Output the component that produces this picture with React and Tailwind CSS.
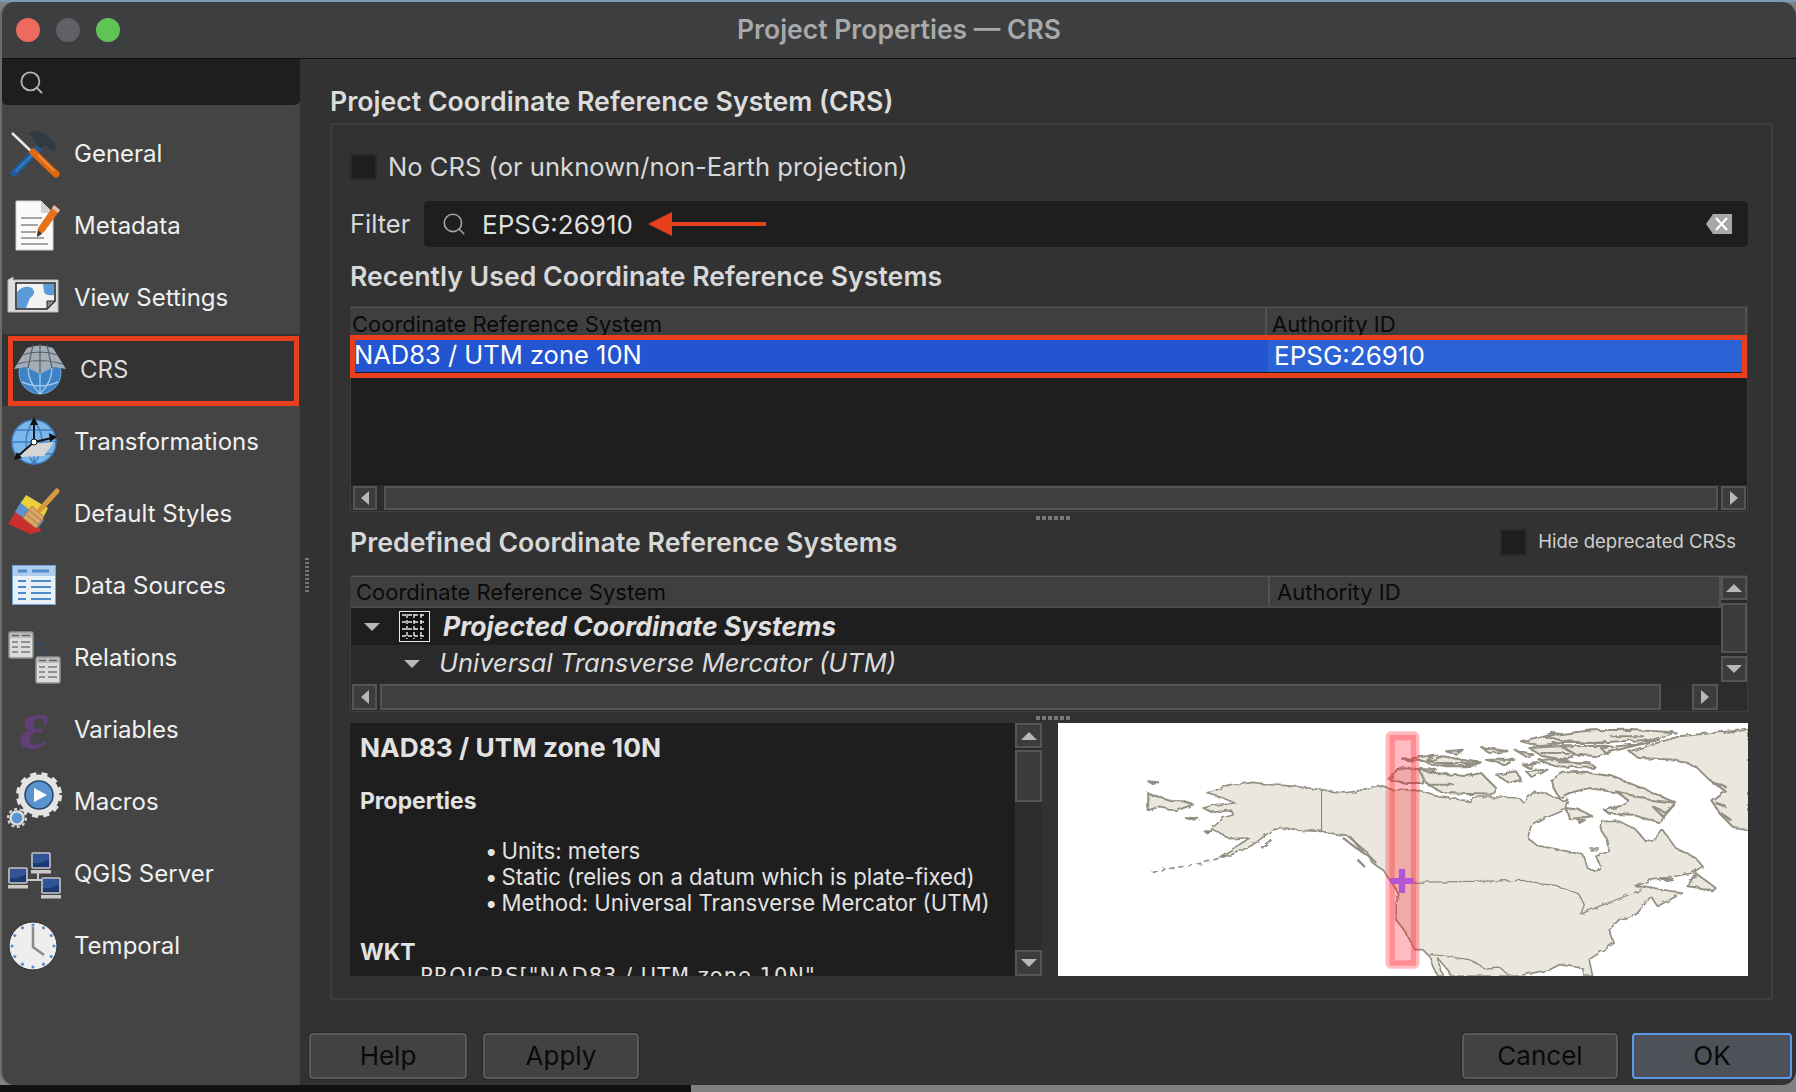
import { Search } from "lucide-react";

const FONT = "font-['Inter','Liberation_Sans',sans-serif]";

// ---- sidebar icons, all on a 60x60 box ----
const IconGeneral = () => (
  <svg width="60" height="60" viewBox="0 0 60 60">
    <line x1="8" y1="9" x2="29" y2="29" stroke="#e8e8e8" strokeWidth="2.5" />
    <line x1="10" y1="49" x2="34" y2="25" stroke="#1f5c9e" strokeWidth="7" strokeLinecap="round" />
    <line x1="12" y1="47" x2="32" y2="27" stroke="#3a7fc4" strokeWidth="2" strokeLinecap="round" />
    <path d="M24 9 Q35 4 44 12 L53 23 L49 28 L41 21 L37 25 L30 18 Q29 12 24 9 Z" fill="#2e3b42" />
    <line x1="29" y1="28" x2="52" y2="50" stroke="#e0680f" strokeWidth="7" strokeLinecap="round" />
    <line x1="34" y1="31" x2="50" y2="47" stroke="#f59a4a" strokeWidth="1.5" />
  </svg>
);
const IconMetadata = () => (
  <svg width="60" height="60" viewBox="0 0 60 60">
    <path d="M12 5 H37 L49 17 V54 H12 Z" fill="#fafafa" stroke="#cfcfcf" />
    <path d="M37 5 V17 H49 Z" fill="#cfd2d4" />
    <path d="M17 22 H38 M17 29 H34 M17 36 H32 M17 42 H40 M17 48 H44" stroke="#a5a5a5" strokeWidth="2" />
    <path d="M50 9 L56 14 L40 36 L33 41 L34 32 Z" fill="#e8721c" />
    <path d="M50 9 L56 14 L54 17 L48 12 Z" fill="#d9c0b2" />
    <path d="M33 41 L34 34 L38 38 Z" fill="#3a3a3a" />
  </svg>
);
const IconView = () => (
  <svg width="60" height="60" viewBox="0 0 60 60">
    <path d="M4 12 L9 9 V12 H54 V44 H4 Z" fill="#dedede" stroke="#b5b5b5" />
    <path d="M12 15 H51 V33 L43 41 H12 Z" fill="#f2f2f2" stroke="#222" strokeWidth="1.5" />
    <path d="M13 24 Q20 16 28 20 Q33 25 26 30 L22 40 H13 Z" fill="#5b9bd8" />
    <path d="M39 16 H50 V27 Q42 28 40 24 Z" fill="#5b9bd8" />
    <path d="M51 33 H43 V41 Z" fill="#8a8a8a" stroke="#222" />
  </svg>
);
const IconCrs = () => (
  <svg width="60" height="60" viewBox="0 0 60 60">
    <circle cx="30" cy="33" r="21" fill="#3d83c6" stroke="#6ea6da" />
    <path d="M12 42 Q30 50 48 42 M30 24 V54 M30 54 Q18 42 18 28 M30 54 Q42 42 42 28" stroke="#9cc6ea" strokeWidth="1.4" fill="none" />
    <path d="M4 29 L17 8 Q30 3 43 8 L56 29 L44 27 L30 34 L16 27 Z" fill="#a3adb6" />
    <path d="M23 5 L18 28 M37 5 L42 28 M30 4 V33 M12 15 Q30 9 48 15 M7 24 Q30 17 53 24" stroke="#55606a" strokeWidth="1.2" fill="none" />
  </svg>
);
const IconTransform = () => (
  <svg width="60" height="60" viewBox="0 0 60 60">
    <circle cx="30" cy="30" r="22" fill="#7db7ea" stroke="#3d7fc0" strokeWidth="1.5" />
    <path d="M8 30 H52 M12 18 H48 M12 42 H48 M30 8 V52 M30 8 Q14 30 30 52 M30 8 Q46 30 30 52" stroke="#3d7fc0" strokeWidth="1.4" fill="none" />
    <path d="M16 45 L26 32 L50 30 L40 44 Z" fill="#d5d5d5" />
    <path d="M30 8 V30 M30 30 L48 26 M30 30 L14 44" stroke="#111" strokeWidth="1.8" />
    <path d="M30 5 L26 13 H34 Z M53 25 L45 21 L46 30 Z M10 48 L18 46 L13 40 Z" fill="#111" />
    <circle cx="30" cy="30" r="3" fill="#fff" stroke="#111" />
  </svg>
);
const IconStyles = () => (
  <svg width="60" height="60" viewBox="0 0 60 60">
    <path d="M4 40 L14 24 L38 47 L26 50 Z" fill="#c9302c" />
    <path d="M11 28 L18 16 L40 36 L34 44 Z" fill="#5d92cf" />
    <path d="M17 19 L22 11 L44 24 L38 36 Z" fill="#e9d23b" />
    <path d="M28 22 L40 33 L32 44 L19 34 Z" fill="#d9a868" stroke="#b07c3e" />
    <path d="M23 31 L35 41 M26 27 L38 37" stroke="#a8743a" strokeWidth="1" />
    <line x1="36" y1="26" x2="53" y2="7" stroke="#d99a3f" strokeWidth="5" strokeLinecap="round" />
  </svg>
);
const IconData = () => (
  <svg width="60" height="60" viewBox="0 0 60 60">
    <rect x="8.5" y="9.5" width="43" height="39" fill="#e8f0f8" stroke="#6ea6da" />
    <rect x="9" y="10" width="42" height="10" fill="#aecdec" />
    <path d="M14 15 H23 M28 15 H45" stroke="#4f8ac8" strokeWidth="3" />
    <path d="M14 25 H22 M27 25 H47 M14 31 H22 M27 31 H47 M14 37 H22 M27 37 H47 M14 43 H22 M27 43 H47" stroke="#4f8ac8" strokeWidth="1.8" />
  </svg>
);
const TinyTable = ({ x, y }) => (
  <g>
    <rect x={x} y={y} width="24" height="26" rx="1.5" fill="#dcdcdc" stroke="#8f8f8f" strokeWidth="1.5" />
    <rect x={x + 1} y={y + 1} width="22" height="5" fill="#bdbdbd" />
    <path d={`M${x + 3} ${y + 3.5} H${x + 10} M${x + 13} ${y + 3.5} H${x + 21}`} stroke="#666" strokeWidth="1.4" />
    <path d={`M${x + 3} ${y + 10} H${x + 9} M${x + 12} ${y + 10} H${x + 21} M${x + 3} ${y + 15} H${x + 9} M${x + 12} ${y + 15} H${x + 21} M${x + 3} ${y + 20} H${x + 9} M${x + 12} ${y + 20} H${x + 21}`} stroke="#777" strokeWidth="1.4" />
  </g>
);
const IconRelations = () => (
  <svg width="60" height="60" viewBox="0 0 60 60">
    <path d="M29 15 H38 V30" stroke="#2c4a70" strokeWidth="1.5" fill="none" />
    <TinyTable x={5} y={4} />
    <TinyTable x={32} y={29} />
  </svg>
);
const IconMacros = () => (
  <svg width="60" height="60" viewBox="0 0 60 60">
    <circle cx="35" cy="23" r="17" fill="none" stroke="#e4e4e4" strokeWidth="7" />
    <circle cx="35" cy="23" r="21" fill="none" stroke="#e4e4e4" strokeWidth="4" strokeDasharray="6 5.2" />
    <circle cx="35" cy="23" r="14" fill="#5b93d0" stroke="#28476b" strokeWidth="1.5" />
    <path d="M30 16 L43 23 L30 30 Z" fill="#fff" />
    <circle cx="13" cy="46" r="6.5" fill="#5b93d0" stroke="#dcdcdc" strokeWidth="2.5" />
    <circle cx="13" cy="46" r="9" fill="none" stroke="#dcdcdc" strokeWidth="2" strokeDasharray="3 2.6" />
  </svg>
);
const TinyPc = ({ x, y }) => (
  <g>
    <rect x={x} y={y} width="18" height="15" rx="1" fill="#2f5597" stroke="#c4c4c4" strokeWidth="1.6" />
    <path d={`M${x + 1} ${y + 10} Q${x + 10} ${y + 11} ${x + 17} ${y + 6} V${y + 14} H${x + 1} Z`} fill="#1c3a70" />
    <rect x={x - 1} y={y + 17} width="20" height="3.5" fill="#c9c9c9" />
  </g>
);
const IconServer = () => (
  <svg width="60" height="60" viewBox="0 0 60 60">
    <path d="M14 36 H44 M34 29 V36" stroke="#c8c8c8" strokeWidth="2" />
    <TinyPc x={28} y={9} />
    <TinyPc x={5} y={24} />
    <TinyPc x={38} y={34} />
  </svg>
);
const IconClock = () => (
  <svg width="60" height="60" viewBox="0 0 60 60">
    <circle cx="29" cy="30" r="24" fill="#eeeeee" stroke="#2c2c2c" strokeWidth="1" />
    {[0, 30, 60, 90, 120, 150, 180, 210, 240, 270, 300, 330].map((a) => (
      <circle
        key={a}
        cx={29 + 21 * Math.sin((a * Math.PI) / 180)}
        cy={30 - 21 * Math.cos((a * Math.PI) / 180)}
        r="1.6"
        fill="#5b8ec8"
      />
    ))}
    <path d="M29 11 V31 L40 39" stroke="#8b8b8b" strokeWidth="2.6" fill="none" />
  </svg>
);
const IconVariables = () => (
  <div className="w-[60px] h-[60px] flex items-center justify-center font-['Liberation_Serif',serif] font-bold italic text-[70px] leading-none text-[#61407a] pb-[10px]">ε</div>
);

const sideItems = [
  { label: "General", icon: <IconGeneral /> },
  { label: "Metadata", icon: <IconMetadata /> },
  { label: "View Settings", icon: <IconView /> },
  { label: "CRS", icon: <IconCrs />, selected: true },
  { label: "Transformations", icon: <IconTransform /> },
  { label: "Default Styles", icon: <IconStyles /> },
  { label: "Data Sources", icon: <IconData /> },
  { label: "Relations", icon: <IconRelations /> },
  { label: "Variables", icon: <IconVariables /> },
  { label: "Macros", icon: <IconMacros /> },
  { label: "QGIS Server", icon: <IconServer /> },
  { label: "Temporal", icon: <IconClock /> },
];

function SideItem({ label, icon, selected }) {
  if (selected) {
    return (
      <div className="relative h-[72px] flex items-center pl-[8px] gap-[10px] bg-[#333333] text-[#dcdcdc]">
        {icon}
        <span className="text-[24px]">{label}</span>
        <div className="absolute left-[6px] right-[1px] top-[2px] bottom-0 border-[5px] border-[#e8401f]" />
      </div>
    );
  }
  return (
    <div className="h-[72px] flex items-center pl-[2px] gap-[10px] text-[#f0f0f0]">
      {icon}
      <span className="text-[24px]">{label}</span>
    </div>
  );
}

// ---- small Qt widgets ----
const Tri = ({ dir }) => {
  const d = {
    left: "M9 1 V15 L1 8 Z",
    right: "M1 1 V15 L9 8 Z",
  }[dir];
  if (d) {
    return (
      <svg width="10" height="16" viewBox="0 0 10 16">
        <path d={d} fill="#b8b8b8" />
      </svg>
    );
  }
  return (
    <svg width="16" height="10" viewBox="0 0 16 10">
      <path d={dir === "up" ? "M0 9 H16 L8 1 Z" : "M0 1 H16 L8 9 Z"} fill="#b8b8b8" />
    </svg>
  );
};

const ScrollBtn = ({ dir, className }) => (
  <div className={`flex items-center justify-center border-2 border-[#555555] bg-[#3c3c3c] ${className}`}>
    <Tri dir={dir} />
  </div>
);

const Dots = () => (
  <div className="flex justify-center gap-[2px] pl-[8px]">
    {[0, 1, 2, 3, 4, 5].map((i) => (
      <div key={i} className="w-[4px] h-[4px] bg-[#777777]" />
    ))}
  </div>
);

const Check = ({ className }) => (
  <div className={`bg-[#1e1e1e] border-2 border-[#292929] ${className}`} />
);

const HeaderCell = ({ className, children }) => (
  <div className={`h-full overflow-hidden border-r-2 border-[#525252] text-[#0a0a0a] text-[22px] leading-[28px] ${className}`}>
    {children}
  </div>
);

const Button = ({ children, className }) => (
  <div className={`h-[46px] flex items-center justify-center pb-[1px] rounded-[4px] border-2 border-[#5a5a5a] outline outline-1 outline-[#262626] bg-[#424242] text-[#0a0a0a] text-[26px] ${className}`}>
    {children}
  </div>
);

// ---- map preview, traced in 3x pixels of the panel ----
const LAND = "M451 212 L496 192 546 184 586 178 646 186 686 188 791 200 856 210 896 205 961 188 1006 200 1066 200 1106 210 1146 222 1190 226 1236 235 1248 222 1316 222 1386 225 1398 238 1431 205 1466 212 1516 232 1531 228 1523 260 1466 285 1421 310 1411 345 1441 368 1506 380 1576 395 1591 435 1616 448 1631 430 1616 400 1656 385 1651 350 1631 320 1636 295 1686 295 1736 320 1766 355 1801 345 1816 320 1856 375 1916 405 1936 430 1906 450 1826 465 1776 472 1736 492 1766 490 1816 500 1876 510 1801 550 1781 520 1766 540 1736 575 1686 590 1656 620 1671 660 1596 710 1606 759 1581 759 1576 735 1506 725 1476 740 1381 759 1181 759 1170 740 1141 705 1150 745 1161 759 1141 759 1126 730 1116 700 1096 680 1071 680 1046 630 1016 590 1016 540 1024 515 1001 478 981 445 946 420 926 385 871 340 792 325 726 322 686 315 646 320 586 365 531 392 486 402 576 345 516 347 486 330 461 318 496 285 526 275 521 262 461 268 436 255 476 245 531 240 496 225 Z";
const ISLANDS = [
  "M1086 105 1130 95 1190 110 1270 118 1240 130 1170 130 1120 125 Z",
  "M996 170 1016 135 1136 140 1091 180 1046 180 Z",
  "M1036 110 1131 95 1106 115 Z",
  "M1086 140 1136 150 1226 160 1271 150 1316 195 1301 215 1156 210 1106 180 Z",
  "M1316 155 1376 145 1391 170 1356 180 Z",
  "M1406 145 1471 140 1426 165 Z",
  "M1481 170 1526 145 1596 150 1666 160 1766 200 1856 240 1821 280 1776 250 1806 262 1686 210 1596 195 1536 210 1506 225 1486 190 Z",
  "M1642 262 1686 250 1714 232 1676 205 1776 230 1856 240 1826 270 1786 250 1821 285 1806 300 1726 275 1656 272 Z",
  "M1391 55 1431 45 1486 30 1556 40 1516 62 1446 70 Z",
  "M1456 40 1606 22 1706 20 1856 28 1786 50 1686 55 1606 60 1526 55 Z",
  "M1416 75 1506 70 1556 90 1526 110 1456 100 Z",
  "M1516 70 1646 68 1686 75 1626 100 1556 95 Z",
  "M1446 112 1486 108 1606 125 1616 135 1496 130 Z",
  "M1631 75 1726 65 1806 50 1726 70 1646 90 Z",
  "M1271 72 1351 85 1296 90 Z",
  "M1166 85 1216 80 1196 95 Z",
  "M1111 115 1156 100 1266 120 1206 130 Z",
  "M1286 110 1371 110 1346 125 Z",
  "M1371 80 1431 95 1406 100 Z",
  "M1396 125 1446 120 1416 135 Z",
  "M1526 255 1566 260 1606 280 1536 288 Z",
  "M1561 292 1586 290 1566 300 Z",
  "M1716 85 1866 40 1966 30 2076 20 2076 322 2031 315 1986 270 1966 235 2006 205 1956 170 1916 130 1856 110 1746 105 Z",
  "M1891 490 1916 450 1936 465 1976 495 1966 505 1931 495 Z",
  "M271 210 311 225 341 235 376 235 406 245 376 255 356 265 306 250 271 262 Z",
  "M271 175 301 178 286 183 Z",
  "M381 282 421 287 406 290 Z",
  "M441 325 461 325 451 332 Z",
  "M1810 465 1850 470 1830 474 Z",
];

const MapPreview = () => (
  <svg className="flex-1 h-full bg-white" viewBox="0 0 2073 759" preserveAspectRatio="none">
    <defs>
      <filter id="coast" x="-2%" y="-2%" width="104%" height="104%">
        <feTurbulence type="fractalNoise" baseFrequency="0.04" numOctaves="3" seed="4" />
        <feDisplacementMap in="SourceGraphic" scale="13" />
      </filter>
    </defs>
    <g filter="url(#coast)">
      <path d={LAND} fill="#eae8de" stroke="#938f82" strokeWidth="5" strokeLinejoin="round" />
      {ISLANDS.map((d) => (
        <path key={d} d={d} fill="#eae8de" stroke="#938f82" strokeWidth="6" strokeLinejoin="round" />
      ))}
      <path d="M1486 60 H1640 M1450 90 H1540 M1660 40 H1760 M1500 118 H1600 M1140 120 H1240 M1110 185 H1190" stroke="#938f82" strokeWidth="6" fill="none" />
      <path d="M1966 180 L2006 190 M1976 240 L2006 250 M1990 270 L2020 290" stroke="#938f82" strokeWidth="8" fill="none" />
      <path d="M1116 695 L1146 697 1236 710 1286 738 1330 735 1356 759" stroke="#938f82" strokeWidth="4" fill="none" />
      <path d="M281 445 366 432 436 420 536 390" stroke="#938f82" strokeWidth="5" strokeDasharray="16 11" fill="none" />
      <path d="M856 345 L896 375 936 400 956 420 M876 340 L916 385 M611 375 L641 350 M900 410 L925 435" stroke="#938f82" strokeWidth="7" fill="none" />
      <path d="M1596 375 H1625 M1600 383 H1620" stroke="#8a867a" strokeWidth="5" />
      <path d="M1069 478 L1406 472 1440 482 1496 487 1566 515 1581 545 1571 573 1625 550 1690 525 1740 505 1766 492" stroke="#8f8c80" strokeWidth="4" fill="none" />
    </g>
    <path d="M792 200 V325" stroke="#7f7c70" strokeWidth="3" />
    <rect x="984" y="25" width="102" height="712" rx="16" fill="#ff0a1e" fillOpacity="0.28" />
    <rect x="1004" y="44" width="64" height="676" fill="none" stroke="#ff2a30" strokeOpacity="0.32" strokeWidth="16" />
    <path d="M1024 438 H1043 V465 H1069 V483 H1043 V510 H1024 V483 H998 V465 H1024 Z" fill="#b455d5" />
  </svg>
);

export default function App() {
  return (
    <div className={`w-[1796px] h-[1092px] overflow-hidden flex flex-col bg-[#808080] ${FONT}`}>
      <div className="h-[2px] bg-[#7d9ab8]" />
      <div className="h-[1083px] flex flex-col rounded-[14px] overflow-hidden border-l-2 border-[#6a6a6a]">
        {/* title bar */}
        <div className="relative h-[57px] shrink-0 flex items-center justify-center bg-[#3d3e40] border-b border-[#0f0f0f]">
          <div className="absolute left-[14px] top-[16px] flex gap-[16px]">
            <div className="w-[24px] h-[24px] rounded-full bg-[#ee6a5e]" />
            <div className="w-[24px] h-[24px] rounded-full bg-[#606164]" />
            <div className="w-[24px] h-[24px] rounded-full bg-[#5fc454]" />
          </div>
          <span className="text-[26.5px] font-semibold text-[#a9a9a9]">Project Properties — CRS</span>
        </div>

        <div className="flex-1 flex min-h-0">
          {/* sidebar */}
          <div className="w-[298px] shrink-0 flex flex-col bg-[#444444]">
            <div className="h-[46px] shrink-0 flex items-center pl-[16px] bg-[#1e1e1e] rounded-b-[5px]">
              <Search size={27} strokeWidth={1.6} className="text-[#b5b5b5]" />
            </div>
            <div className="mt-[13px] flex flex-col">
              {sideItems.map((it) => (
                <SideItem key={it.label} {...it} />
              ))}
            </div>
          </div>

          {/* main */}
          <div className="flex-1 min-w-0 flex bg-[#323232]">
            <div className="w-[30px] shrink-0 flex flex-col items-start justify-center pl-[5px]">
              <div className="grid grid-cols-1 gap-[2px] mt-[6px]">
                {[0, 1, 2, 3, 4, 5, 6, 7, 8].map((i) => (
                  <div key={i} className="w-[4px] h-[2px] bg-[#777777]" />
                ))}
              </div>
            </div>
            <div className="flex-1 min-w-0 flex flex-col">
              <div className="h-[64px] shrink-0 flex items-end pb-[7px] text-[26.7px] font-semibold text-[#dcdcdc] leading-[30px]">
                Project Coordinate Reference System (CRS)
              </div>

              {/* group box */}
              <div className="h-[877px] shrink-0 mr-[23px] border-2 border-[#3e3e3e] rounded-[3px] pl-[18px] pr-[23px] flex flex-col">
                <div className="h-[76px] shrink-0 flex items-center pt-[8px] gap-[11px] text-[#d8d8d8] text-[25.6px]">
                  <Check className="w-[27px] h-[26px]" />
                  <span>No CRS (or unknown/non-Earth projection)</span>
                </div>
                <div className="h-[46px] shrink-0 flex items-center">
                  <span className="w-[74px] text-[25.5px] text-[#d8d8d8]">Filter</span>
                  <div className="flex-1 h-full flex items-center rounded-[5px] bg-[#1e1e1e] pl-[17px] pr-[16px]">
                    <Search size={26} strokeWidth={1.5} className="text-[#a5a5a5]" />
                    <span className="ml-[15px] text-[26px] text-[#dfdfdf]">EPSG:26910</span>
                    <svg className="ml-[15px]" width="118" height="26" viewBox="0 0 118 26">
                      <path d="M0 13 L24 1 V11 H118 V15 H24 V25 Z" fill="#e8401f" />
                    </svg>
                    <svg className="ml-auto" width="26" height="20" viewBox="0 0 26 20">
                      <path d="M0 10 L7 0 H26 V20 H7 Z" fill="#a8a8a8" />
                      <path d="M10 4 L21 16 M21 4 L10 16" stroke="#fff" strokeWidth="2.2" />
                    </svg>
                  </div>
                </div>
                <div className="h-[59px] shrink-0 flex items-end pb-[15px] text-[26.7px] font-semibold text-[#d8d8d8] leading-[30px]">
                  Recently Used Coordinate Reference Systems
                </div>

                {/* recent table */}
                <div className="h-[206px] shrink-0 flex flex-col bg-[#1e1e1e] border border-[#3e3e3e]">
                  <div className="h-[30px] shrink-0 flex bg-[#3f3f3f] border-t border-[#555555]">
                    <HeaderCell className="w-[916px] pl-[1px] pt-[2px]">Coordinate Reference System</HeaderCell>
                    <HeaderCell className="flex-1 border-r-0 pl-[5px] pt-[2px]">Authority ID</HeaderCell>
                  </div>
                  <div className="relative h-[38px] shrink-0 flex items-center text-[#ffffff] text-[25.5px]">
                    <div className="w-[917px] h-[32px] flex items-center pl-[3px] pb-[1px] bg-[#2355d0]">NAD83 / UTM zone 10N</div>
                    <div className="flex-1 h-[32px] flex items-center pl-[6px] pb-[1px] bg-[#2b63d6] text-[26px]">EPSG:26910</div>
                    <div className="absolute -left-[1px] right-0 -top-[2px] -bottom-[3px] border-[5px] border-[#e8401f]" />
                  </div>
                  <div className="flex-1" />
                  <div className="h-[26px] shrink-0 flex items-center pl-[2px] pr-[1px] bg-[#2c2c2c]">
                    <ScrollBtn dir="left" className="w-[24px] h-[24px]" />
                    <div className="ml-[7px] flex-1 h-[24px] bg-[#3f3f3f] border-2 border-[#555555]" />
                    <ScrollBtn dir="right" className="ml-[3px] w-[25px] h-[24px]" />
                  </div>
                </div>

                <div className="h-[12px] shrink-0 flex items-center justify-center">
                  <Dots />
                </div>

                <div className="h-[51px] shrink-0 flex items-center justify-between pr-[12px] pb-[15px]">
                  <span className="text-[26.7px] font-semibold text-[#d8d8d8]">Predefined Coordinate Reference Systems</span>
                  <div className="flex items-center gap-[11px]">
                    <Check className="w-[27px] h-[27px]" />
                    <span className="text-[18.5px] text-[#d0d0d0]">Hide deprecated CRSs</span>
                  </div>
                </div>

                {/* predefined tree */}
                <div className="h-[137px] shrink-0 flex flex-col border border-[#3e3e3e] bg-[#2c2c2c]">
                  <div className="h-[107px] shrink-0 flex">
                    <div className="flex-1 min-w-0 flex flex-col">
                      <div className="h-[32px] shrink-0 flex bg-[#3f3f3f] border-t border-b-2 border-t-[#555555] border-b-[#4c4c4c]">
                        <HeaderCell className="w-[919px] pl-[5px] pt-[1px]">Coordinate Reference System</HeaderCell>
                        <HeaderCell className="flex-1 border-r-0 pl-[7px] pt-[1px]">Authority ID</HeaderCell>
                      </div>
                      <div className="h-[37px] shrink-0 flex items-center bg-[#1e1e1e] pl-[13px] text-[#e0e0e0]">
                        <Tri dir="down" />
                        <svg className="ml-[19px]" width="31" height="31" viewBox="0 0 31 31">
                          <rect x="0.5" y="0.5" width="30" height="30" fill="#111" stroke="#e8e8e8" />
                          <path d="M3 4 H27 M3 11 H27 M3 18 H27 M3 25 H27 M8 3 V28 M15 3 V28 M22 3 V28" stroke="#e8e8e8" strokeWidth="1.4" strokeDasharray="4 2" />
                        </svg>
                        <span className="ml-[13px] text-[26.5px] font-bold italic">Projected Coordinate Systems</span>
                      </div>
                      <div className="h-[37px] shrink-0 flex items-center bg-[#2a2a2a] pl-[53px] text-[#dcdcdc]">
                        <Tri dir="down" />
                        <span className="ml-[19px] text-[25.5px] italic">Universal Transverse Mercator (UTM)</span>
                      </div>
                    </div>
                    <div className="w-[26px] shrink-0 flex flex-col gap-[3px] bg-[#2c2c2c]">
                      <ScrollBtn dir="up" className="h-[24px]" />
                      <div className="h-[50px] border-2 border-[#555555] bg-[#3c3c3c]" />
                      <ScrollBtn dir="down" className="h-[26px]" />
                    </div>
                  </div>
                  <div className="flex-1 flex items-center pl-[1px] gap-[3px]">
                    <ScrollBtn dir="left" className="w-[25px] h-[26px]" />
                    <div className="w-[1281px] h-[26px] bg-[#3f3f3f] border-2 border-[#555555]" />
                    <div className="w-[25px]" />
                    <ScrollBtn dir="right" className="w-[26px] h-[26px]" />
                  </div>
                </div>

                <div className="h-[11px] shrink-0 flex items-center justify-center">
                  <Dots />
                </div>

                {/* details + map */}
                <div className="h-[253px] shrink-0 flex gap-[16px]">
                  <div className="w-[692px] shrink-0 flex bg-[#1e1e1e]">
                    <div className="flex-1 min-w-0 overflow-hidden pl-[10px] text-[#e2e2e2]">
                      <div className="h-[50px] flex items-center text-[26.3px] font-bold">NAD83 / UTM zone 10N</div>
                      <div className="h-[56px] flex items-center text-[22.9px] font-bold">Properties</div>
                      <ul className="mt-[9px] ml-[125px] flex flex-col text-[22.2px] leading-[26px] whitespace-nowrap">
                        <li className="flex gap-[4px]"><span>•</span>Units: meters</li>
                        <li className="flex gap-[4px]"><span>•</span>Static (relies on a datum which is plate-fixed)</li>
                        <li className="flex gap-[4px]"><span>•</span>Method: Universal Transverse Mercator (UTM)</li>
                      </ul>
                      <div className="mt-[23px] text-[22.9px] font-bold leading-[26px]">WKT</div>
                      <div className="ml-[60px] -mt-[2px] text-[21px] tracking-[1px] font-['DejaVu_Sans',sans-serif] leading-[26px] whitespace-nowrap">PROJCRS["NAD83 / UTM zone 10N"</div>
                    </div>
                    <div className="w-[27px] shrink-0 flex flex-col bg-[#2c2c2c]">
                      <ScrollBtn dir="up" className="h-[25px]" />
                      <div className="h-[52px] mt-[2px] border-2 border-[#555555] bg-[#3c3c3c]" />
                      <div className="flex-1" />
                      <ScrollBtn dir="down" className="h-[26px]" />
                    </div>
                  </div>
                  <MapPreview />
                </div>
              </div>

              {/* buttons */}
              <div className="flex-1 flex items-start pt-[33px] -ml-[21px] mr-[4px] justify-between">
                <div className="flex gap-[16px]">
                  <Button className="w-[158px]">Help</Button>
                  <Button className="w-[156px]">Apply</Button>
                </div>
                <div className="flex gap-[14px]">
                  <Button className="w-[156px]">Cancel</Button>
                  <div className="w-[160px] h-[46px] flex items-center justify-center pb-[1px] rounded-[4px] border-2 border-[#5a9ae6] bg-[#4d5158] text-[#0a0a0a] text-[26px]">OK</div>
                </div>
              </div>
            </div>
          </div>
        </div>
      </div>
      <div className="flex-1 flex">
        <div className="w-[691px] bg-[#111111]" />
        <div className="flex-1 bg-[#808080]" />
      </div>
    </div>
  );
}
